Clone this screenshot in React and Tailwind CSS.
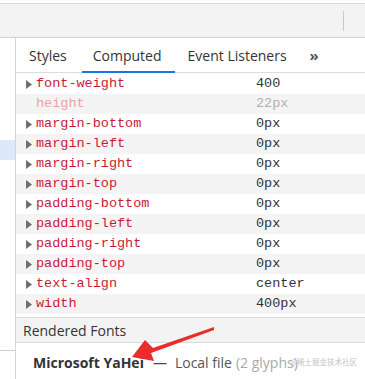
const rows = [
  { name: 'font-weight', value: '400' },
  { name: 'height', value: '22px', faded: true },
  { name: 'margin-bottom', value: '0px' },
  { name: 'margin-left', value: '0px' },
  { name: 'margin-right', value: '0px' },
  { name: 'margin-top', value: '0px' },
  { name: 'padding-bottom', value: '0px' },
  { name: 'padding-left', value: '0px' },
  { name: 'padding-right', value: '0px' },
  { name: 'padding-top', value: '0px' },
  { name: 'text-align', value: 'center' },
  { name: 'width', value: '400px' },
];

const mono = { fontFamily: '"Liberation Mono", "DejaVu Sans Mono", monospace' };

const Row = ({ row, index }) => {
  return (
    <div
      className={`h-[20px] flex items-center text-[13.5px] leading-none ${index % 2 === 1 ? 'bg-[#f4f4f4]' : 'bg-white'}`}
      style={mono}
    >
      <div className="w-[20px] pl-[10px] flex items-center">
        {!row.faded && (
          <svg width="6" height="9" viewBox="0 0 6 9">
            <path d="M0 0 L6 4.5 L0 9 Z" fill="#6f6f6f" />
          </svg>
        )}
      </div>
      <div className={`w-[220px] ${row.faded ? 'text-[#e8a3ad]' : 'text-[#c81a36]'}`}>{row.name}</div>
      <div className={row.faded ? 'text-[#b0b0b0]' : 'text-[#333]'}>{row.value}</div>
    </div>
  );
};

const App = () => {
  return (
    <div
      className="w-[365px] h-[379px] overflow-hidden relative bg-white flex flex-col"
      style={{ fontFamily: '"Open Sans", "Noto Sans", sans-serif' }}
    >
      <div className="h-[4px] bg-white border-b border-[#d9d9d9] shrink-0" />
      <div className="h-[34px] bg-[#f3f3f3] border-b border-[#cfcfcf] shrink-0 flex items-center justify-end">
        <div className="w-px h-[20px] bg-[#c8c8c8] mr-[21px]" />
      </div>
      <div className="flex flex-1 min-h-0">
        <div className="w-[16px] border-r border-[#d6d6d6] flex flex-col shrink-0">
          <div className="h-[102px]" />
          <div className="h-[20px] bg-[#dde9f8]" />
          <div className="h-[190px]" />
          <div className="border-b border-[#cfcfcf]" />
        </div>
        <div className="flex-1 flex flex-col">
          <div className="h-[35px] border-b border-[#dcdcdc] flex items-stretch pl-[13px] text-[14px] text-[#333] shrink-0">
            <div className="flex items-center pt-px">Styles</div>
            <div className="ml-[15px] px-[11px] pt-px flex items-center relative">
              Computed
              <div className="absolute left-0 right-[-2px] bottom-[-1px] h-[2px] bg-[#1a73e8]" />
            </div>
            <div className="ml-[15px] pt-px flex items-center">Event Listeners</div>
            <div className="ml-[23px] flex items-center text-[15px] font-bold text-[#555]">»</div>
          </div>
          <div className="flex flex-col pt-px">
            {rows.map((row, i) => (
              <Row key={row.name} row={row} index={i} />
            ))}
          </div>
          <div className="h-[3px]" />
          <div className="h-[26px] bg-[#f3f3f3] border-y border-[#dadada] flex items-center pl-[7px] text-[14px] text-[#333]">
            Rendered Fonts
          </div>
          <div className="flex-1 flex items-center pl-[17px] pt-[2px] text-[14px] whitespace-nowrap">
            <span className="font-bold text-[#333]">Microsoft YaHei</span>
            <span className="ml-[9px] text-[#444]">—</span>
            <span className="ml-[8px] text-[#555]">Local file</span>
            <span className="ml-[4px] text-[#aaa]">(2 glyphs)</span>
          </div>
        </div>
      </div>
      <svg className="absolute left-0 top-0 pointer-events-none" width="365" height="379" viewBox="0 0 365 379">
        <path d="M214 327 L153 348 L145 340 L132 357 L154 361 L151 353 L214 330 Z" fill="#ea2c2c" />
      </svg>
      <div
        className="absolute left-[290px] top-[358px] text-[7.5px] text-[#c4c4c4] leading-none whitespace-nowrap"
        style={{ fontFamily: '"Noto Sans CJK SC", sans-serif' }}
      >
        @稀土掘金技术社区
      </div>
    </div>
  );
};

export default App;
